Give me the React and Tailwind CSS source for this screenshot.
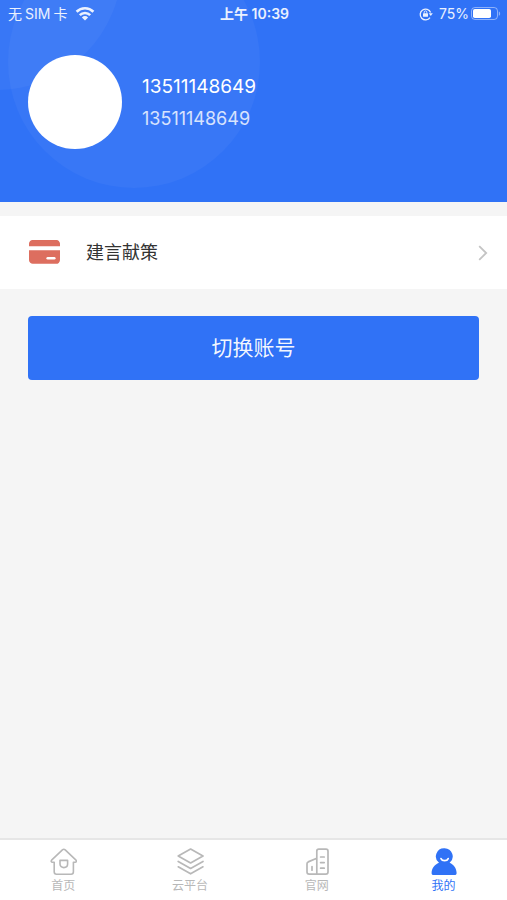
import { useState } from 'react';

const WifiIcon = () => (
  <svg viewBox="0 0 20 15" className="w-5 h-4" fill="none" stroke="currentColor" strokeWidth="2.6">
    <path d="M1.6 5.2a12 12 0 0 1 16.8 0" />
    <path d="M4.8 8.6a7.4 7.4 0 0 1 10.4 0" />
    <path d="M10 14 6.9 10.9a4.4 4.4 0 0 1 6.2 0Z" fill="currentColor" stroke="none" />
  </svg>
);

const RotationLockIcon = () => (
  <svg viewBox="0 0 14 14" className="size-3.5" fill="none" stroke="currentColor" strokeWidth="1.3">
    <path d="M11 10.6A5.4 5.4 0 1 1 11.6 5.4" />
    <path d="M9.8 6.2h4L11.8 9Z" fill="currentColor" stroke="none" />
    <rect x="4" y="6.2" width="5" height="3.6" rx="0.5" fill="currentColor" stroke="none" />
    <path d="M5.2 6.4V5.2a1.3 1.3 0 0 1 2.6 0v1.2" strokeWidth="0.9" />
  </svg>
);

const BatteryIcon = () => (
  <svg viewBox="0 0 30 14" className="w-[30px] h-3.5" fill="none">
    <rect x="0.5" y="0.5" width="26" height="12" rx="3.4" stroke="white" strokeOpacity="0.45" />
    <rect x="2" y="2" width="18" height="9" rx="1.8" fill="white" />
    <path d="M27.8 4.4c1.8.6 1.8 3.8 0 4.4Z" fill="white" fillOpacity="0.45" />
  </svg>
);

const CardIcon = () => (
  <svg viewBox="0 0 32 26" className="w-8 h-[26px]" fill="#dd6e5f">
    <path d="M5.1 0h22.6A3.8 3.8 0 0 1 32 4v2.2H1V4A3.8 3.8 0 0 1 5.1 0Z" />
    <path d="M1 10.2h31V20a3.8 3.8 0 0 1-4.3 3.8H5.1A3.8 3.8 0 0 1 1 20Z" />
    <rect x="18.4" y="17" width="9.2" height="2.6" rx="1.3" fill="white" />
  </svg>
);

const HomeIcon = () => (
  <svg viewBox="0 0 28 28" className="size-7" fill="none" stroke="currentColor" strokeWidth="1.6" strokeLinejoin="round" strokeLinecap="round">
    <path d="M13.4 1.9 2.6 12.2c-.8.9-.4 2 .8 2h1.8v9.6c0 1.4.9 2.4 2.3 2.4h14.6c1.4 0 2.3-1 2.3-2.4v-9.6h1.8c1.2 0 1.6-1.1.8-2L16.2 1.9c-.9-.8-1.9-.8-2.8 0Z" />
    <path d="M11 12.4h7.6V16c0 4.8-7.6 4.8-7.6 0Z" />
  </svg>
);

const LayersIcon = () => (
  <svg viewBox="0 0 28 28" className="size-7" fill="none" stroke="currentColor" strokeWidth="1.7" strokeLinejoin="round" strokeLinecap="round">
    <path d="M14.6 1 27 8 14.6 15 2.2 8Z" />
    <path d="m2.2 13.4 12.4 7 12.4-7" />
    <path d="m2.2 18.8 12.4 7 12.4-7" />
  </svg>
);

const BuildingIcon = () => (
  <svg viewBox="0 0 28 28" className="size-7" fill="none" stroke="currentColor" strokeWidth="1.7" strokeLinejoin="round" strokeLinecap="round">
    <path d="M13.8 26.2V3.2c0-1.2.8-2 2-2H23c1.2 0 2 .8 2 2V24c0 1.4-.8 2.2-2.2 2.2H6.2C4.8 26.2 4 25.4 4 24v-8.2c0-.9.4-1.5 1.2-1.9l8.6-3.7M13.8 26.2" />
    <path d="M17.6 9h3.6M17.6 14.6h3.6M17.6 20.2h3.6M9 18.6v3.6" />
  </svg>
);

const PersonIcon = () => (
  <svg viewBox="0 0 28 28" className="size-7">
    <path
      d="M14.6.2a8.2 8.2 0 0 1 5 14.6c4.2 1.8 6.8 5.4 7 10 .1 1.5-.6 2.3-2 2.3H3.6c-1.4 0-2.1-.8-2-2.3.2-4.6 3-8.2 7.4-10A8.2 8.2 0 0 1 14.6.2Z"
      fill="currentColor"
    />
    <path d="M11 10.6c1.2 2.8 6 2.8 7.2 0" fill="none" stroke="white" strokeWidth="1.7" strokeLinecap="round" />
  </svg>
);

const tabs = [
  { id: 'home', label: '首页', Icon: HomeIcon },
  { id: 'cloud', label: '云平台', Icon: LayersIcon },
  { id: 'site', label: '官网', Icon: BuildingIcon },
  { id: 'mine', label: '我的', Icon: PersonIcon },
];

const StatusBar = () => (
  <div className="relative grid grid-cols-3 items-center h-7 pl-2 pr-1.5 text-sm leading-5 text-white/90">
    <div className="flex items-center gap-2">
      <span className="flex gap-[3px]">
        <span>无</span>
        <span>SIM</span>
        <span>卡</span>
      </span>
      <WifiIcon />
    </div>
    <span className="text-center font-semibold">上午 10:39</span>
    <div className="flex items-center justify-end">
      <RotationLockIcon />
      <span className="pl-1.5 pr-0.5">75%</span>
      <BatteryIcon />
    </div>
  </div>
);

const ProfileHeader = () => (
  <header className="relative h-[202px] overflow-hidden bg-[#3072f6] text-white">
    <div className="absolute left-2 -top-16 size-[252px] rounded-full bg-white/4" />
    <div className="absolute -left-32 -top-40 size-[250px] rounded-full bg-white/4" />
    <StatusBar />
    <div className="relative flex items-center gap-5 px-7 pt-[27px]">
      <div className="size-[94px] rounded-full bg-white" />
      <div className="pt-0.5">
        <p className="text-[19px] leading-8">13511148649</p>
        <p className="text-[18px] leading-8 text-white/80">13511148649</p>
      </div>
    </div>
  </header>
);

export default function App() {
  const [active, setActive] = useState('mine');

  return (
    <div className="min-h-screen flex flex-col bg-[#f5f5f5] font-[Inter,'Noto_Sans_CJK_SC',sans-serif]">
      <ProfileHeader />

      <main className="flex-1">
        <a href="#suggestions" className="flex items-center mt-3.5 h-[73px] pl-7 pr-[19px] bg-white">
          <CardIcon />
          <span className="flex-1 pl-[26px] text-[18px] leading-7 text-[#333]">建言献策</span>
          <svg viewBox="0 0 10 16" className="w-2.5 h-4" fill="none" stroke="#c4c4c4" strokeWidth="1.8">
            <path d="m1.2 1.2 7 6.8-7 6.8" />
          </svg>
        </a>

        <div className="px-7 pt-[27px]">
          <button type="button" className="w-full h-16 rounded-sm bg-[#3072f6] text-[21px] leading-8 text-white/95">
            切换账号
          </button>
        </div>
      </main>

      <nav className="grid grid-cols-4 h-[62px] border-t-2 border-[#e6e6e6] bg-white">
        {tabs.map(({ id, label, Icon }) => (
          <button
            key={id}
            type="button"
            onClick={() => setActive(id)}
            className={`flex flex-col items-center pt-2 ${active === id ? 'text-[#3072f6]' : 'text-[#b8b8b8]'}`}
          >
            <Icon />
            <span className="text-xs leading-5">{label}</span>
          </button>
        ))}
      </nav>
    </div>
  );
}
